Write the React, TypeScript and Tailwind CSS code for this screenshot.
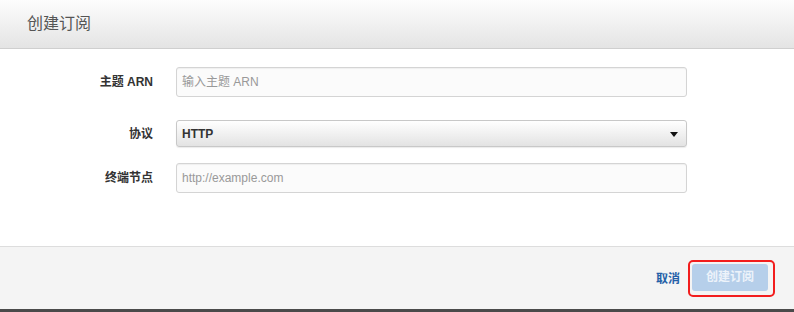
import React from 'react';

const font = { fontFamily: '"Liberation Sans", Arial, "Noto Sans CJK SC", sans-serif' };

const Row: React.FC<{ label: string; className?: string; children: React.ReactNode }> = ({ label, className, children }) => (
  <div className={`flex items-center ${className ?? ''}`}>
    <label className="w-[153px] pr-0 text-right text-[12px] font-bold text-[#333]">{label}</label>
    <div className="ml-[23px] w-[511px]">{children}</div>
  </div>
);

const App: React.FC = () => {
  return (
    <div className="w-[794px] h-[312px] flex flex-col bg-white overflow-hidden" style={font}>
      {/* Header */}
      <div className="h-[49px] shrink-0 flex items-center pl-[27px] border-b border-[#cfcfcf] bg-gradient-to-b from-[#fdfdfd] to-[#e4e4e4]">
        <h3 className="text-[16px] text-[#555] leading-none">创建订阅</h3>
      </div>

      {/* Body */}
      <div className="h-[197px] shrink-0 pt-[18px]">
        <Row label="主题 ARN">
          <input
            placeholder="输入主题 ARN"
            className="w-full h-[30px] px-[5px] text-[12px] text-[#333] placeholder:text-[#999] bg-[#fbfbfb] border border-[#d4d4d4] rounded-[3px] shadow-[inset_0_1px_1px_rgba(0,0,0,0.05)] outline-none"
          />
        </Row>
        <Row label="协议" className="mt-[23px]">
          <div className="relative w-full h-[27px] flex items-center px-[5px] bg-gradient-to-b from-[#ffffff] to-[#e3e3e3] border border-[#c8c8c8] rounded-[3px] shadow-[0_1px_1px_rgba(0,0,0,0.08)]">
            <span className="text-[12px] font-bold text-[#333]">HTTP</span>
            <svg className="absolute right-[8px] top-[11px]" width="8" height="5" viewBox="0 0 8 5">
              <path d="M0 0 H8 L4 5 Z" fill="#111" />
            </svg>
          </div>
        </Row>
        <Row label="终端节点" className="mt-[16px]">
          <input
            placeholder="http://example.com"
            className="w-full h-[30px] px-[5px] text-[12px] text-[#333] placeholder:text-[#999] bg-[#fbfbfb] border border-[#d4d4d4] rounded-[3px] shadow-[inset_0_1px_1px_rgba(0,0,0,0.05)] outline-none"
          />
        </Row>
      </div>

      {/* Footer */}
      <div className="h-[63px] shrink-0 border-t border-[#dddddd] bg-[#f4f4f4] flex items-center justify-end pr-[19px]">
        <a className="text-[12px] font-bold text-[#2460a7] mr-[8px] mt-[1px]">取消</a>
        <div className="border-2 border-[#f21d1d] rounded-[5px] pl-[2px] pr-[5px] pt-[2px] pb-[4px]">
          <button
            disabled
            className="w-[76px] h-[27px] rounded-[3px] bg-[#b6cfea] text-[12px] font-bold text-[#edf3fa]"
          >
            创建订阅
          </button>
        </div>
      </div>
      <div className="h-[3px] shrink-0 bg-[#4a4a4a]" />
    </div>
  );
};

export default App;
